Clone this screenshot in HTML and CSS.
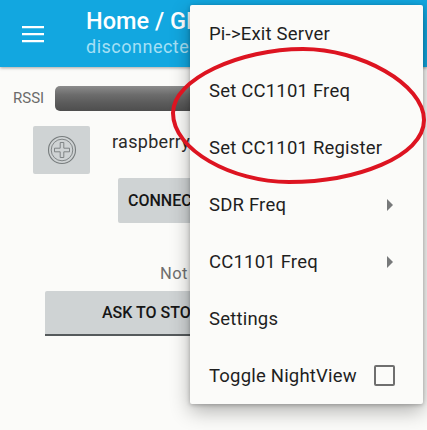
FILE: index.html
```html
<!DOCTYPE html>
<html lang="en">
<head>
    <meta charset="UTF-8">
    <meta name="viewport" content="width=device-width, initial-scale=1.0">
    <title>Home / GPS</title>
    <link rel="stylesheet" href="styles.css">
</head>
<body>

<div class="appbar">
    <svg class="burger" width="24" height="24" viewBox="0 0 24 24" fill="#fff">
        <path d="M1 4h22v2.2H1zM1 11h22v2.2H1zM1 18h22v2.2H1z"/>
    </svg>
    <div class="appbar-text">
        <div class="appbar-title">Home / GPS</div>
        <div class="appbar-sub">disconnected</div>
    </div>
</div>

<div class="content">
    <div class="rssi-row">
        <span class="rssi-label">RSSI</span>
        <div class="rssi-bar"></div>
    </div>

    <div class="device-row">
        <div class="device-tile">
            <svg width="30" height="30" viewBox="0 0 30 30" fill="none" stroke="#777c7d">
                <circle cx="15" cy="15" r="13.5" stroke-width="1.1"/>
                <circle cx="15" cy="15" r="10.8" stroke-width="0.9"/>
                <path d="M13.2 7.5h3.6v5.7h5.7v3.6h-5.7v5.7h-3.6v-5.7H7.5v-3.6h5.7z" stroke-width="0.9"/>
            </svg>
        </div>
        <span class="device-name">raspberrypi</span>
    </div>

    <button class="btn btn-connect">CONNECT</button>

    <p class="status">Not connected</p>

    <button class="btn btn-stop">ASK TO STOP SERVER</button>
</div>

<!-- overflow menu -->
<ul class="menu">
    <li>Pi-&gt;Exit Server</li>
    <li>Set CC1101 Freq</li>
    <li>Set CC1101 Register</li>
    <li>SDR Freq <span class="arrow"></span></li>
    <li>CC1101 Freq <span class="arrow"></span></li>
    <li>Settings</li>
    <li>Toggle NightView <span class="check"></span></li>
</ul>

<!-- hand drawn red circle on top of the screenshot -->
<svg class="scribble" width="427" height="430" viewBox="0 0 427 430" fill="none">
    <path d="M303 49C360 49 424 84 424 120C424 157 355 182 289 182C232 182 173 150 173 113C173 79 240 49 303 49Z" stroke="#dd1421" stroke-width="4"/>
</svg>

</body>
</html>
```

FILE: styles.css
```css
* {
    box-sizing: border-box;
}

body {
    margin: 0;
    width: 427px;
    height: 430px;
    overflow: hidden;
    position: relative;
    background: #fbfbf9;
    font-family: Roboto, "Liberation Sans", sans-serif;
}

.appbar {
    height: 67px;
    background: #12a7e0;
    display: flex;
    align-items: center;
    padding: 0 0 0 21px;
    box-shadow: 0 1px 3px rgba(0, 0, 0, 0.35);
}

.burger {
    flex: none;
}

.appbar-text {
    margin-left: 41px;
    margin-top: -1px;
    white-space: nowrap;
}

.appbar-title {
    color: #fff;
    font-size: 23.5px;
    font-weight: 500;
    line-height: 28px;
}

.appbar-sub {
    color: #a5e0f5;
    font-size: 18px;
    line-height: 24px;
    letter-spacing: 0.5px;
}

.content {
    display: flex;
    flex-direction: column;
    padding-top: 19px;
}

.rssi-row {
    display: flex;
    align-items: center;
    padding-left: 13px;
    height: 24px;
}

.rssi-label {
    color: #6b6b6b;
    font-size: 15px;
    width: 42px;
}

.rssi-bar {
    width: 359px;
    height: 25px;
    border-radius: 5px;
    background: linear-gradient(#8c8c8c, #6c6c6c 35%, #5a5a5a 70%, #4e4e4e);
}

.device-row {
    display: flex;
    align-items: flex-start;
    margin: 16px 0 0 33px;
}

.device-tile {
    width: 57px;
    height: 48px;
    background: #cfd3d4;
    border-radius: 2px;
    display: flex;
    align-items: center;
    justify-content: center;
}

.device-name {
    margin: 5px 0 0 22px;
    font-size: 18px;
    line-height: 22px;
    letter-spacing: 0.3px;
    color: #2a2a2a;
}

.btn {
    display: block;
    border: none;
    background: #cfd3d4;
    color: #161616;
    font-family: inherit;
    font-size: 16px;
    font-weight: 500;
    padding: 0;
}

.btn-connect {
    align-self: flex-start;
    margin: 4px 0 0 118px;
    width: 176px;
    height: 45px;
    border-radius: 2px;
    text-align: left;
    padding-left: 10px;
}

.status {
    margin: 41px 0 0 160px;
    color: #6f6f6f;
    font-size: 16.5px;
    line-height: 20px;
    letter-spacing: 0.4px;
}

.btn-stop {
    align-self: flex-start;
    margin: 7px 0 0 45px;
    width: 337px;
    height: 45px;
    border-radius: 2px 2px 0 0;
    border-bottom: 2px solid #555a5c;
    text-align: left;
    padding-left: 57px;
}

.menu {
    position: absolute;
    top: 5px;
    left: 190px;
    width: 233px;
    margin: 0;
    padding: 0;
    list-style: none;
    background: #fbfbf9;
    border-radius: 2px;
    box-shadow: 0 7px 20px rgba(0, 0, 0, 0.3), 0 1px 4px rgba(0, 0, 0, 0.25);
}

.menu li {
    height: 57px;
    display: flex;
    align-items: center;
    justify-content: space-between;
    padding: 0 27px 0 19px;
    font-size: 18.5px;
    letter-spacing: 0.2px;
    color: #1f1f1f;
    white-space: nowrap;
}

.arrow {
    width: 0;
    height: 0;
    margin-right: 3px;
    border-left: 6px solid #77797a;
    border-top: 6px solid transparent;
    border-bottom: 6px solid transparent;
}

.check {
    width: 21px;
    height: 21px;
    border: 2px solid #6f6f6f;
    border-radius: 2px;
    margin-right: 1px;
}

.scribble {
    position: absolute;
    top: 0;
    left: 0;
    pointer-events: none;
}
```
